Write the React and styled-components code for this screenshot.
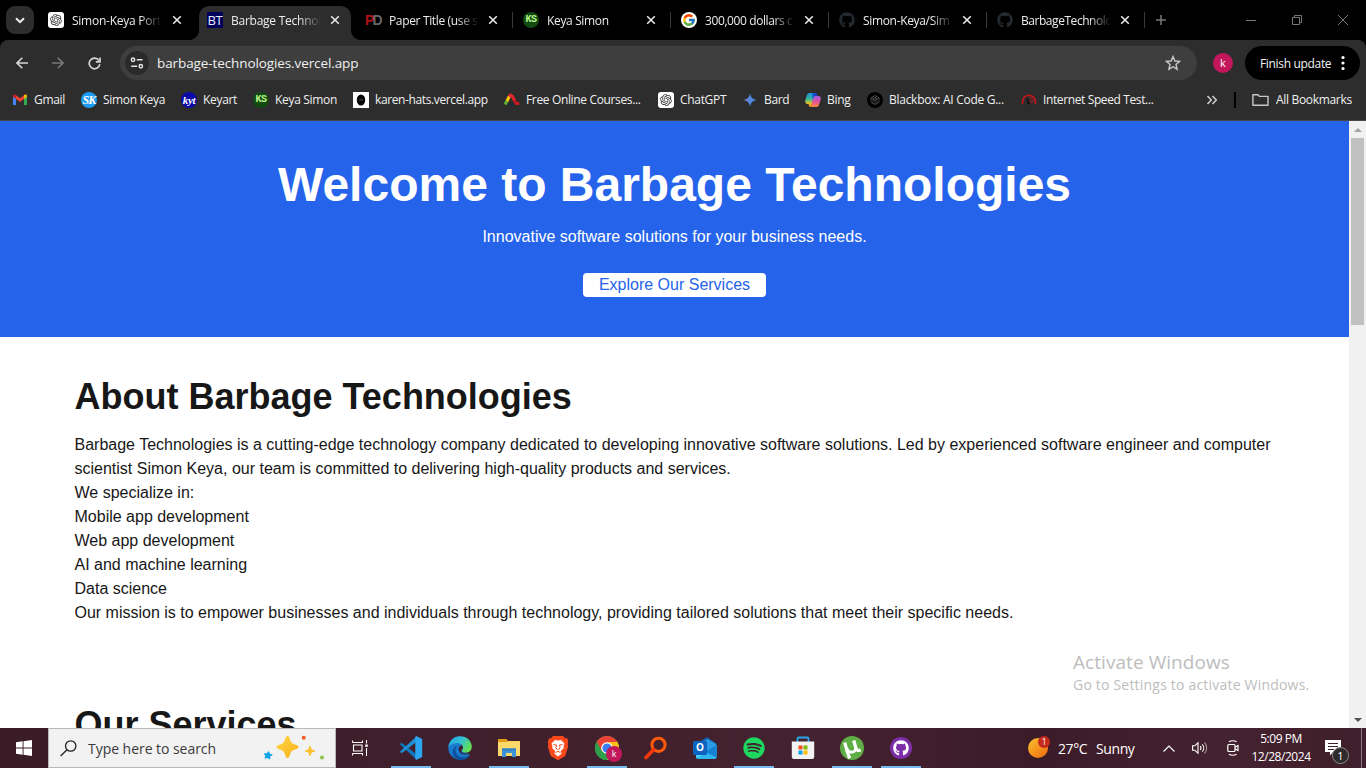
import React from "react";
import styled, { createGlobalStyle } from "styled-components";
import { RiOpenaiFill } from "react-icons/ri";
import { FcGoogle } from "react-icons/fc";
import { FaGithub, FaSpotify } from "react-icons/fa";

const Global = createGlobalStyle`
  * { box-sizing: border-box; }
  html, body { margin: 0; padding: 0; overflow: hidden; background: #fff; }
  svg { display: block; flex: none; }
  h1, h2, p, ul { margin: 0; padding: 0; }
`;

const ui = `"Open Sans", "Noto Sans", sans-serif`;

const Screen = styled.div`
  position: relative;
  width: 1366px;
  height: 768px;
  display: flex;
  flex-direction: column;
  overflow: hidden;
  font-family: ${ui};
`;

/* ---------- tab strip ---------- */
const TabStrip = styled.div`
  height: 40px;
  flex: none;
  background: #000;
  display: flex;
  align-items: flex-start;
  padding-left: 6px;
`;
const TabSearch = styled.div`
  width: 28px;
  height: 28px;
  margin-top: 6px;
  margin-right: 7px;
  border-radius: 9px;
  background: #2d2d2d;
  display: flex;
  align-items: center;
  justify-content: center;
`;
const Tab = styled.div`
  position: relative;
  width: 158px;
  height: 34px;
  margin-top: 6px;
  display: flex;
  align-items: center;
  padding: 0 0 6px 7px;
  color: #ececec;
`;
const ActiveTab = styled(Tab)`
  z-index: 1;
  width: 152px;
  margin-right: 7px;
  padding-left: 8px;
  background: #2d2d2d;
  border-radius: 10px 10px 0 0;
  &::before, &::after {
    content: "";
    position: absolute;
    bottom: 0;
    width: 10px;
    height: 10px;
  }
  &::before { left: -10px; background: radial-gradient(circle at 0 0, #000 9.5px, #2d2d2d 10.5px); }
  &::after { right: -10px; background: radial-gradient(circle at 100% 0, #000 9.5px, #2d2d2d 10.5px); }
`;
const TabTitle = styled.span`
  width: 90px;
  margin-left: 8px;
  padding-top: 1px;
  overflow: hidden;
  white-space: nowrap;
  font-size: 12px;
  line-height: 18px;
  letter-spacing: ${(p) => p.$ls ?? -0.25}px;
  -webkit-mask-image: linear-gradient(to right, #000 68px, transparent 90px);
  mask-image: linear-gradient(to right, #000 68px, transparent 90px);
`;
const TabClose = styled.span`
  margin-left: ${(p) => (p.$first ? 10 : 9)}px;
  width: 10px;
  height: 10px;
`;
const Divider = styled.i`
  width: 1px;
  height: 16px;
  margin-left: auto;
  margin-right: 3px;
  background: #3a3a3a;
`;
const WindowButtons = styled.div`
  margin-left: auto;
  display: flex;
  height: 40px;
  color: #777;
`;
const WinBtn = styled.div`
  width: 46px;
  height: 40px;
  display: flex;
  align-items: center;
  justify-content: center;
`;
const NewTab = styled.div`
  width: 26px;
  height: 40px;
  display: flex;
  align-items: center;
  justify-content: center;
`;

/* ---------- favicons ---------- */
const Fav = styled.span`
  flex: none;
  width: 16px;
  height: 16px;
  border-radius: ${(p) => p.$r || 0};
  background: ${(p) => p.$bg || "transparent"};
  color: ${(p) => p.$c || "#fff"};
  font: ${(p) => p.$font || `12px/16px ${ui}`};
  letter-spacing: ${(p) => p.$ls || 0}px;
  display: flex;
  align-items: center;
  justify-content: center;
  white-space: nowrap;
`;
const Tint = styled.span`color: ${(p) => p.$c};`;

/* ---------- toolbar ---------- */
const Chrome = styled.div`
  flex: none;
  height: 81px;
  background: #2d2d2d;
  border-radius: 8px 8px 0 0;
  border-bottom: 1px solid #474747;
`;
const ChromeBack = styled.div`
  flex: none;
  background: #000;
`;
const Toolbar = styled.div`
  height: 46px;
  display: flex;
  align-items: center;
  padding: 0 6px 0 4px;
`;
const NavBtn = styled.div`
  width: 36px;
  display: flex;
  justify-content: center;
  color: ${(p) => (p.$dim ? "#777" : "#d6d6d6")};
`;
const Omnibox = styled.div`
  width: 1077px;
  height: 34px;
  margin-left: 8px;
  border-radius: 17px;
  background: #3e3e3e;
  display: flex;
  align-items: center;
  padding: 0 16px 0 5px;
  color: #f0f0f0;
`;
const SiteInfo = styled.div`
  width: 24px;
  height: 24px;
  border-radius: 50%;
  background: #2a2a2a;
  display: flex;
  align-items: center;
  justify-content: center;
`;
const Url = styled.span`
  margin-left: 8px;
  margin-right: auto;
  font-size: 13.5px;
  letter-spacing: -0.1px;
`;
const Avatar = styled.div`
  width: 20px;
  height: 20px;
  margin-left: 16px;
  border-radius: 50%;
  background: #c2185b;
  color: #fff;
  font-size: 11px;
  line-height: 19px;
  text-align: center;
`;
const Update = styled.div`
  margin-left: 12px;
  width: 115px;
  height: 34px;
  border-radius: 17px;
  background: #000;
  color: #f2f2f2;
  font-size: 12px;
  letter-spacing: -0.33px;
  display: flex;
  align-items: center;
  padding: 0 0 0 15px;
  white-space: nowrap;
`;
const UpdateLabel = styled.span`width: 80px;`;

/* ---------- bookmarks ---------- */
const Bookmarks = styled.div`
  height: 28px;
  display: flex;
  align-items: center;
  padding-left: 12px;
  color: #f0f0f0;
`;
const Mark = styled.div`
  width: ${(p) => p.$w}px;
  flex: none;
  display: flex;
  align-items: center;
  gap: 6px;
  font-size: 12px;
  line-height: 16px;
  white-space: nowrap;
  letter-spacing: ${(p) => p.$ls ?? -0.32}px;
`;
const MarkText = styled.span`padding-bottom: 1px;`;
const BarDivider = styled.i`
  width: 2px;
  height: 16px;
  background: #000;
  margin: 0 16px 0 16px;
`;

/* ---------- page ---------- */
const Viewport = styled.div`
  flex: 1;
  min-height: 0;
  display: flex;
`;
const Page = styled.main`
  flex: 1;
  overflow: hidden;
  color: #171717;
  background: #fff;
  font: 16px/24px "Liberation Sans", Arial, sans-serif;
`;
const Hero = styled.header`
  background: #2563eb;
  color: #fff;
  text-align: center;
  padding: 40px 0;
  height: 216px;
`;
const HeroTitle = styled.h1`
  font-size: 48px;
  line-height: 48px;
  margin-bottom: 16px;
`;
const HeroButton = styled.a`
  display: inline-block;
  margin-top: 24px;
  padding: 0 16px;
  border-radius: 4px;
  background: #fff;
  color: #2563eb;
`;
const Section = styled.section`
  width: 1280px;
  margin: 0 auto;
  padding: 40px;
`;
const Heading = styled.h2`
  font-size: 36px;
  line-height: 40px;
  margin-bottom: 16px;
`;
const List = styled.ul`list-style: none;`;

const Scrollbar = styled.div`
  width: 17px;
  background: #f1f1f1;
  display: flex;
  flex-direction: column;
  align-items: center;
`;
const Arrow = styled.div`
  width: 17px;
  height: 17px;
  display: flex;
  align-items: center;
  justify-content: center;
`;
const Thumb = styled.div`
  width: 13px;
  height: 187px;
  background: #c1c1c1;
  margin-bottom: auto;
`;

const Watermark = styled.div`
  position: absolute;
  left: 1073px;
  top: 649px;
  color: #bdbdbd;
  white-space: nowrap;
`;
const WmTitle = styled.div`
  font-size: 19px;
  line-height: 26px;
  letter-spacing: 0.06px;
`;
const WmText = styled.div`
  font-size: 14px;
  line-height: 20px;
  letter-spacing: 0.2px;
`;

/* ---------- taskbar ---------- */
const Taskbar = styled.footer`
  height: 40px;
  flex: none;
  display: flex;
  background: linear-gradient(90deg, #3a1c27, #44222f 60%, #3c1b28 76%, #44222f 90%, #3f1f2b);
  color: #fff;
`;
const Cell = styled.div`
  position: relative;
  width: ${(p) => p.$w || 49}px;
  height: 40px;
  flex: none;
  display: flex;
  align-items: center;
  justify-content: center;
  padding-right: ${(p) => p.$pr || 0}px;
  padding-bottom: ${(p) => p.$pb || 0}px;
`;
const AppCell = styled(Cell)`
  padding-right: 1px;
  &::after {
    content: "";
    display: ${(p) => (p.$open ? "block" : "none")};
    position: absolute;
    left: 4px;
    right: 5px;
    bottom: 0;
    height: 2px;
    background: #76b9ed;
  }
`;
const Search = styled.div`
  width: 288px;
  height: 40px;
  background: #f2f2f2;
  border: 1px solid #b9b9b9;
  display: flex;
  align-items: center;
  padding: 0 8px 0 11px;
  color: #3a3a3a;
  font-size: 14px;
`;
const SearchText = styled.span`
  margin-left: 11px;
  margin-right: auto;
  white-space: nowrap;
  letter-spacing: -0.04px;
`;
const Tray = styled.div`
  margin-left: auto;
  width: 338px;
  display: flex;
`;
const Weather = styled.div`
  width: 128px;
  display: flex;
  align-items: center;
  white-space: nowrap;
  font-size: 14px;
  letter-spacing: -0.4px;
`;
const Temp = styled.span`
  width: 38px;
  margin-left: 7px;
`;
const Clock = styled.div`
  width: 68px;
  padding-top: 2px;
  text-align: center;
  font-size: 12px;
  line-height: 18px;
  letter-spacing: -0.45px;
  white-space: nowrap;
`;
const ShowDesktop = styled.div`
  width: 5px;
  margin-left: auto;
  border-left: 1px solid #8b7780;
`;

const TabX = ({ first }) => (
  <TabClose $first={first}>
    <svg width="10" height="10" viewBox="0 0 10 10" stroke="#e6e6e6" strokeWidth="1.6">
      <path d="M1.2 1.2 8.8 8.8M8.8 1.2 1.2 8.8" />
    </svg>
  </TabClose>
);
const OpenAi = () => (
  <Fav $bg="#fff" $r="3px"><RiOpenaiFill size={14} color="#333" /></Fav>
);
const KS = () => (
  <Fav $bg="#124a12" $r="50%" $c="#b9f58a" $ls={-0.4} $font={`bold 10px/16px "Liberation Mono", monospace`}>KS</Fav>
);

const Brave = () => (
  <svg width="22" height="26" viewBox="0 0 22 26">
    <path d="M6 1h10l2.3 2.4 2-.3L21.300 7l-.6 2 .5 2.500-3 9.500L11 25.200 3.800 21 .8 11.500 1.300 9 .7 7l1.500-3.900 1.700.3z" fill="#f9481c" />
    <path d="M11 5.500 14 5l3.500 3.600-1 2.600.4 1.800-3.300 3.200 1.200 2.200L11 21.500l-3.800-3.100 1.200-2.200L5.100 13l.4-1.800-1-2.600L8 5z" fill="#fff" />
    <path d="M6.500 9.500 9.500 10l-.6 2.600 1.500 2.200M15.500 9.500 12.500 10l.6 2.600-1.500 2.200M8.500 17.700 11 16.300l2.500 1.400" stroke="#f9481c" strokeWidth="1" fill="none" />
  </svg>
);

const VsCode = () => (
  <svg width="24" height="24" viewBox="0 0 24 24">
    <path d="M.8 8.300 2.600 6.700 18 18.600V23.600L16.800 23.100z" fill="#0f75bd" />
    <path d="M.8 15.700 2.600 17.300 18 5.400V.4L16.800.9z" fill="#1e8fd5" />
    <path d="M17.600.3 23.200 3v18l-5.600 2.700c-.7.2-1.300-.2-1.300-.8V1.100c0-.6.6-1 1.300-.8z" fill="#2aa7f0" />
  </svg>
);

const Edge = () => (
  <svg width="24" height="24" viewBox="0 0 24 24">
    <defs>
      <linearGradient id="eg1" x1="0" y1="0" x2="1" y2=".5"><stop stopColor="#1f9fe0" /><stop offset=".55" stopColor="#35c1d4" /><stop offset="1" stopColor="#62dd55" /></linearGradient>
      <linearGradient id="eg2" x1="0" y1="0" x2="0" y2="1"><stop stopColor="#1b84d8" /><stop offset="1" stopColor="#1672c4" /></linearGradient>
    </defs>
    <path d="M12 .3C5.500.3.3 5.500.3 12S5.500 23.700 12 23.700c4 0 7.600-2 9.700-5.100L14 14z" fill="url(#eg2)" />
    <path d="M.5 11C1 4.800 6 .3 12 .3c7 0 11.800 4.800 11.800 10.400 0 3.600-2.600 5.800-5.900 5.800-2.700 0-4.100-.9-4.100-1.700 0-.7 1.100-1.200 1.100-3.200C14.900 8.900 12.300 7 9 7 5 7 1.800 8.800.5 11z" fill="url(#eg1)" />
    <path d="M9.700 9.800c-2.600 1.600-3 5.200-1.100 8.200 2.800 4.300 8.500 4.600 13.200 1.200l-.2.700c-2.800 3.600-7.500 4.800-11.600 3.500C5 21.800 4.300 16.200 5.300 13.300c.8-2.200 2.600-3.300 4.400-3.500z" fill="#0d4f9c" />
    <path d="M13.500 9.600c-2.500.2-3.700 3.300-2.200 5.800 1.800 3 5.700 3.900 10.700 2.100-1.300.2-2.800.1-4.200 0-3.200-.2-4.800-1.300-4.500-2.800.2-.8 1.300-1.400 1.300-3.100 0-.8-.3-1.500-1.100-2z" fill="#3f1f2b" />
  </svg>
);

const Explorer = () => (
  <svg width="22" height="20" viewBox="0 0 22 20">
    <path d="M0 1h8l1.500 2H22v15H0z" fill="#f9d15c" />
    <path d="M0 1h8.300L10 3 8.700 4H0z" fill="#e09f16" />
    <path d="M0 4.500h22V18H0z" fill="#fbd96d" />
    <path d="M4 19v-8.500h14V19h-4v-4H8v4z" fill="#3d94d9" />
    <path d="M4 10.500h14v2H4z" fill="#2f7fc4" />
  </svg>
);

const KBadge = styled.span`
  position: absolute;
  left: 23px;
  top: 18px;
  width: 16px;
  height: 16px;
  border-radius: 50%;
  background: #c2185b;
  font-size: 9px;
  line-height: 15px;
  text-align: center;
`;
const ChromeLogo = () => (
  <svg width="24" height="24" viewBox="0 0 24 24">
    <circle cx="12" cy="12" r="12" fill="#34a853" />
    <path d="M12 12 1.600 6A12 12 0 0 1 22.400 6z" fill="#ea4335" />
    <path d="M12 6H22.400A12 12 0 0 1 12 24l5.200-9z" fill="#fbc116" />
    <path d="M1.600 6 6.800 15 12 12V6z" fill="#ea4335" />
    <path d="M1.600 6A12 12 0 0 0 12 24l5.200-9L12 17.500 6.800 15z" fill="#2f9e4b" />
    <circle cx="12" cy="12" r="5.800" fill="#fff" />
    <circle cx="12" cy="12" r="4.600" fill="#3b7ded" />
  </svg>
);

const Everything = () => (
  <svg width="24" height="24" viewBox="0 0 24 24" fill="none" stroke="#ff5a0a">
    <circle cx="14.500" cy="8.800" r="6.600" strokeWidth="3" />
    <path d="M9.800 13.500 2 21.500" strokeWidth="3.600" stroke="#f4380c" strokeLinecap="round" />
  </svg>
);

const OutlookO = styled.span`
  position: absolute;
  left: 12px;
  top: 13px;
  width: 14px;
  height: 14px;
  border-radius: 1px;
  background: #0c64c0;
  color: #fff;
  font-weight: 700;
  font-size: 10px;
  line-height: 13px;
  text-align: center;
`;
const Outlook = () => (
  <svg width="24" height="24" viewBox="0 0 24 24">
    <path d="M3 8 14 1l9.500 6.500V21H3z" fill="#0f5cab" />
    <path d="M6 8 14.500 3 23 8v6H6z" fill="#2b9be6" />
    <path d="M3 11 14 17 23.700 9v12a2 2 0 0 1-2 2H5a2 2 0 0 1-2-2z" fill="#2fb6f0" />
    <path d="M23.700 9v12.500L12 16z" fill="#1681d2" />
    <path d="M3 12v10l12-5z" fill="#49cdf7" />
  </svg>
);

const Store = () => (
  <svg width="24" height="24" viewBox="0 0 24 24">
    <path d="M6.500 6V2.500a1 1 0 0 1 1-1h9a1 1 0 0 1 1 1V6" fill="none" stroke="#28a8ea" strokeWidth="1.800" />
    <path d="M.8 5.500h22.400V21a2 2 0 0 1-2 2H2.800a2 2 0 0 1-2-2z" fill="#f3f3f3" />
    <path d="M7.500 9.500h4v4h-4z" fill="#f25022" />
    <path d="M12.500 9.500h4v4h-4z" fill="#7fba00" />
    <path d="M7.500 14.500h4v4h-4z" fill="#00a4ef" />
    <path d="M12.500 14.500h4v4h-4z" fill="#ffb900" />
  </svg>
);

const UTorrent = () => (
  <svg width="24" height="24" viewBox="0 0 24 24" fill="none" stroke="#fff" strokeWidth="3.300">
    <circle cx="12" cy="12" r="12" fill="#5fae45" stroke="none" />
    <path d="M4.800 6.500C6 12 7.500 17 9.600 22.300" />
    <path d="M7 12.500c1.300 5.300 9.200 4.600 8.700-.9" strokeWidth="2.800" />
    <path d="M13.700 4.500 15.900 12c.7 2.400 2.400 2.800 4.800 2" />
  </svg>
);

const GitHubDesktop = styled.span`
  width: 22px;
  height: 22px;
  border-radius: 50%;
  background: #7c2fa8;
  display: flex;
  align-items: center;
  justify-content: center;
`;

const Sparkles = () => (
  <svg width="64" height="28" viewBox="0 0 64 28">
    <defs><linearGradient id="sp" x1="0" y1="0" x2="1" y2="1"><stop stopColor="#ffd84a" /><stop offset="1" stopColor="#f8b017" /></linearGradient></defs>
    <path d="M24.500 2c1.200 0 1.800 1 2.300 2.700.9 3.600 2.300 5 5.900 6 1.800.5 2.800 1.200 2.800 2.300s-1 1.800-2.800 2.300c-3.600 1-5 2.400-5.900 6-.5 1.700-1.100 2.700-2.300 2.700s-1.800-1-2.300-2.700c-.9-3.600-2.300-5-5.900-6-1.800-.5-2.800-1.200-2.800-2.300s1-1.800 2.800-2.300c3.600-1 5-2.400 5.900-6C22.700 3 23.300 2 24.500 2z" fill="url(#sp)" />
    <path d="M47 12.200c.8 3.200 1.800 4.100 4.900 4.800-3.100.7-4.100 1.600-4.900 4.800-.8-3.200-1.800-4.100-4.900-4.800 3.100-.7 4.100-1.600 4.900-4.800z" fill="#fbc02d" stroke="#fbc02d" strokeLinejoin="round" />
    <path d="M5.600 18 6.500 20.300l2.300.4-2.100 1.500-.2 2.600-2-1.600-2.300.8.900-2.500-1.500-1.600 2.500.1z" fill="#0ea5e9" stroke="#0ea5e9" strokeWidth="1.300" strokeLinejoin="round" />
    <circle cx="40.700" cy="3.800" r="2" fill="#f25c22" />
    <circle cx="59" cy="23.500" r="2" fill="#8bc34a" />
  </svg>
);

const SunWrap = styled.span`
  position: relative;
  width: 23px;
  height: 24px;
`;
const Sun = styled.span`
  position: absolute;
  left: 0;
  top: 2px;
  width: 20px;
  height: 20px;
  border-radius: 50%;
  background: linear-gradient(135deg, #f9b32b 15%, #f07a14 80%);
`;
const SunBadge = styled.span`
  position: absolute;
  left: 10px;
  top: 0;
  width: 12px;
  height: 12px;
  border-radius: 50%;
  background: #c42b1c;
  font-size: 8.5px;
  line-height: 12px;
  text-align: center;
`;
const NoteBadge = styled.span`
  position: absolute;
  left: 17px;
  top: 19px;
  width: 17px;
  height: 17px;
  border-radius: 50%;
  border: 1px solid #8d8d8d;
  background: #2d2b2c;
  font-size: 11px;
  line-height: 15px;
  text-align: center;
`;

export default function App() {
  return (
    <Screen>
      <Global />
      <TabStrip>
        <TabSearch>
          <svg width="10" height="7" viewBox="0 0 10 7" fill="none" stroke="#eee" strokeWidth="2"><path d="M1 1.200 5 5.200 9 1.200" /></svg>
        </TabSearch>
        <Tab><OpenAi /><TabTitle>Simon-Keya Port</TabTitle><TabX first /></Tab>
        <ActiveTab>
          <Fav $bg="#00005c" $c="#e8e8ff" $font={`13px/15px ${ui}`} $ls={-0.4}>BT</Fav>
          <TabTitle>Barbage Technol</TabTitle><TabX />
        </ActiveTab>
        <Tab>
          <Fav $font={`bold 14px/16px "Liberation Sans", sans-serif`} $ls={-1.8}>
            <Tint $c="#b01116">P</Tint><Tint $c="#666">D</Tint>
          </Fav>
          <TabTitle $ls={-0.35}>Paper Title (use s</TabTitle><TabX /><Divider />
        </Tab>
        <Tab><KS /><TabTitle $ls={-0.35}>Keya Simon</TabTitle><TabX /><Divider /></Tab>
        <Tab><Fav $bg="#fff" $r="50%"><FcGoogle size={14} /></Fav><TabTitle $ls={-0.4}>300,000 dollars c</TabTitle><TabX /><Divider /></Tab>
        <Tab><Fav><FaGithub size={16} color="#24292f" /></Fav><TabTitle $ls={-0.33}>Simon-Keya/Sim</TabTitle><TabX /><Divider /></Tab>
        <Tab><Fav><FaGithub size={16} color="#24292f" /></Fav><TabTitle $ls={-0.45}>BarbageTechnolo</TabTitle><TabX /><Divider /></Tab>
        <NewTab>
          <svg width="10" height="10" viewBox="0 0 10 10" stroke="#777" strokeWidth="1.500"><path d="M5 0v10M0 5h10" /></svg>
        </NewTab>
        <WindowButtons>
          <WinBtn><svg width="10" height="10" viewBox="0 0 10 10" stroke="currentColor"><path d="M0 5.500h10" /></svg></WinBtn>
          <WinBtn><svg width="10" height="10" viewBox="0 0 10 10" stroke="currentColor" fill="none"><path d="M.5 2.500h7v7h-7zM2.500 2.500v-2h7v7h-2" /></svg></WinBtn>
          <WinBtn><svg width="10" height="10" viewBox="0 0 10 10" stroke="currentColor"><path d="M0 0l10 10M10 0 0 10" /></svg></WinBtn>
        </WindowButtons>
      </TabStrip>

      <ChromeBack>
        <Chrome>
          <Toolbar>
            <NavBtn><svg width="12" height="12" viewBox="0 0 12 12" fill="none" stroke="currentColor" strokeWidth="1.600"><path d="M12 6H1.200M6.300.7 1 6l5.300 5.300" /></svg></NavBtn>
            <NavBtn $dim><svg width="12" height="12" viewBox="0 0 12 12" fill="none" stroke="currentColor" strokeWidth="1.600"><path d="M0 6h10.800M5.700.7 11 6l-5.300 5.300" /></svg></NavBtn>
            <NavBtn><svg width="13" height="13" viewBox="0 0 13 13" fill="none" stroke="currentColor" strokeWidth="1.700"><path d="M11 3.600A5.300 5.300 0 1 0 11.800 7.200" /><path d="M12 .5v4.300H7.800" /></svg></NavBtn>
            <Omnibox>
              <SiteInfo>
                <svg width="14" height="12" viewBox="0 0 14 12" fill="none" stroke="#e3e3e3" strokeWidth="1.500"><circle cx="3" cy="2.800" r="1.700" /><path d="M6.800 2.800H12.500M1.200 9.200H7" /><circle cx="10.800" cy="9.200" r="1.700" /></svg>
              </SiteInfo>
              <Url>barbage-technologies.vercel.app</Url>
              <svg width="16" height="16" viewBox="0 0 16 16" fill="none" stroke="#c9c9c9" strokeWidth="1.400"><path d="M8 1.600 9.900 6l4.700.4-3.600 3.100 1.100 4.700L8 11.700l-4.100 2.500L5 9.500 1.400 6.400 6.100 6z" /></svg>
            </Omnibox>
            <Avatar>k</Avatar>
            <Update>
              <UpdateLabel>Finish update</UpdateLabel>
              <svg width="6" height="16" viewBox="0 0 6 16" fill="#fff"><circle cx="3" cy="2.500" r="1.600" /><circle cx="3" cy="8" r="1.600" /><circle cx="3" cy="13.500" r="1.600" /></svg>
            </Update>
          </Toolbar>
          <Bookmarks>
            <Mark $w={69} $ls={-0.3}>
              <svg width="16" height="16" viewBox="0 0 16 16"><path d="M1 4v9h3V6.500z" fill="#4285f4" /><path d="M15 4v9h-3V6.500z" fill="#34a853" /><path d="M1 4.500V4c0-1.500 1.600-2 2.700-1.100L4 3.100v3.900L1 5z" fill="#c5221f" /><path d="M15 4.500V4c0-1.500-1.600-2-2.700-1.100L12 3.100v3.900L15 5z" fill="#fbbc04" /><path d="M4 3.200 8 6.200l4-3V7L8 10 4 7z" fill="#ea4335" /></svg>
              <MarkText>Gmail</MarkText>
            </Mark>
            <Mark $w={100}><Fav $bg="#1d9bf0" $r="50%" $ls={-0.8} $font={`italic bold 12px/16px "Liberation Serif", serif`}>SK</Fav><MarkText>Simon Keya</MarkText></Mark>
            <Mark $w={72}><Fav $bg="#0a0aa8" $r="50%" $ls={-0.3} $font={`italic bold 11px/13px "Liberation Serif", serif`}>kyt</Fav><MarkText>Keyart</MarkText></Mark>
            <Mark $w={100}><KS /><MarkText>Keya Simon</MarkText></Mark>
            <Mark $w={151} $ls={-0.38}>
              <Fav $bg="#fff"><svg width="10" height="12" viewBox="0 0 10 12"><ellipse cx="5" cy="6" rx="4.200" ry="5.500" fill="#050505" /><path d="M3 6.300 4.500 5.700l1 .4L7 5.700" stroke="#777" fill="none" strokeWidth=".7" /></svg></Fav>
              <MarkText>karen-hats.vercel.app</MarkText>
            </Mark>
            <Mark $w={154} $ls={-0.35}>
              <svg width="16" height="16" viewBox="0 0 16 16" fill="none" strokeWidth="3"><path d="M1 12.500 3.500 8" stroke="#5cb531" /><path d="M3 9 5.500 4" stroke="#fdc500" /><path d="M5 4.500 6.500 3 8.500 4.500l2 4" stroke="#e4262c" /><path d="M10 8l2.300 3.500h3" stroke="#c91820" /><path d="M6 12.500h4" stroke="#1d2b50" strokeWidth="1.500" /></svg>
              <MarkText>Free Online Courses...</MarkText>
            </Mark>
            <Mark $w={84}><OpenAi /><MarkText>ChatGPT</MarkText></Mark>
            <Mark $w={63}>
              <svg width="16" height="16" viewBox="0 0 16 16"><defs><linearGradient id="bd"><stop stopColor="#8a7fd0" /><stop offset=".4" stopColor="#5a86dd" /><stop offset="1" stopColor="#3f8ce8" /></linearGradient></defs><path d="M8 1.500C8.600 5.300 10.700 7.400 14.500 8 10.700 8.600 8.600 10.700 8 14.500 7.400 10.700 5.300 8.600 1.500 8 5.300 7.400 7.400 5.300 8 1.500z" fill="url(#bd)" /></svg>
              <MarkText>Bard</MarkText>
            </Mark>
            <Mark $w={62}>
              <svg width="16" height="16" viewBox="0 0 16 16"><defs><linearGradient id="b1" x1="0" y1="0" x2="0" y2="1"><stop stopColor="#1e8fe0" /><stop offset=".5" stopColor="#2fb5a0" /><stop offset="1" stopColor="#f0c419" /></linearGradient><linearGradient id="b2" x1="0" y1="0" x2="0" y2="1"><stop stopColor="#9b5de5" /><stop offset=".5" stopColor="#e0509f" /><stop offset="1" stopColor="#fb8b3c" /></linearGradient></defs><path d="M4.500 1H11L8 10.500c-.3 1-1 1.500-2 1.500H2.500C.4 12-.2 10 .4 8L2 3c.4-1.300 1.200-2 2.500-2z" fill="url(#b1)" /><path d="M11.500 15H5.500L8.500 5.500c.3-1 1-1.500 2-1.500h3c2.100 0 2.700 2 2.100 4L14 13c-.4 1.300-1.200 2-2.500 2z" fill="url(#b2)" /><path d="M7.500 1H10c1.500 0 2 1 2.500 3h-2c-1 0-1.700.5-2 1.500L7.600 8z" fill="#1748c9" /><path d="M5 12h1.500L5.500 15c-1 0-1.600-1-2-3z" fill="#f5a623" /></svg>
              <MarkText>Bing</MarkText>
            </Mark>
            <Mark $w={154} $ls={-0.27}>
              <Fav $bg="#000" $r="50%"><svg width="12" height="12" viewBox="0 0 12 12" fill="none" stroke="#8a8a8a" strokeWidth=".7"><path d="M6 1.500 10 3.800v4.500L6 10.600 2 8.300V3.800zM2 3.800l4 2.300 4-2.300M6 6v4.600M4 2.600l4 2.400v4.500M8 2.600 4 5v4.500" strokeDasharray="1 .6" /></svg></Fav>
              <MarkText>Blackbox: AI Code G...</MarkText>
            </Mark>
            <Mark $w={185} $ls={-0.38}>
              <svg width="16" height="16" viewBox="0 0 16 16" fill="none" stroke="#c4161c" strokeWidth="1.600"><path d="M1.600 12V9.500A6.400 6.200 0 0 1 14.400 9.500V12" /><path d="M8.500 5.500a4 4 0 0 1 3.500 5M8.500 7.800A3 3 0 0 1 10 11" strokeWidth="1" /><path d="M6 6l3 6H7z" fill="#111" stroke="#111" strokeWidth=".8" /></svg>
              <MarkText>Internet Speed Test...</MarkText>
            </Mark>
            <svg width="12" height="10" viewBox="0 0 12 10" fill="none" stroke="#d0d0d0" strokeWidth="1.500"><path d="M1.500 1 5.300 5 1.500 9M6.500 1l3.800 4-3.800 4" /></svg>
            <BarDivider />
            <Mark $w={100}>
              <svg width="18" height="16" viewBox="0 0 18 16" fill="none" stroke="#c7c7c7" strokeWidth="1.400"><path d="M.9 2.700h5l1.600 1.700h8.500v8.900H.9z" strokeLinejoin="round" /></svg>
              <MarkText>All Bookmarks</MarkText>
            </Mark>
          </Bookmarks>
        </Chrome>
      </ChromeBack>

      <Viewport>
        <Page>
          <Hero>
            <HeroTitle>Welcome to Barbage Technologies</HeroTitle>
            <p>Innovative software solutions for your business needs.</p>
            <HeroButton>Explore Our Services</HeroButton>
          </Hero>
          <Section>
            <Heading>About Barbage Technologies</Heading>
            <p>Barbage Technologies is a cutting-edge technology company dedicated to developing innovative software solutions. Led by experienced software engineer and computer scientist Simon Keya, our team is committed to delivering high-quality products and services.</p>
            <p>We specialize in:</p>
            <List>
              <li>Mobile app development</li>
              <li>Web app development</li>
              <li>AI and machine learning</li>
              <li>Data science</li>
            </List>
            <p>Our mission is to empower businesses and individuals through technology, providing tailored solutions that meet their specific needs.</p>
          </Section>
          <Section>
            <Heading>Our Services</Heading>
          </Section>
        </Page>
        <Scrollbar>
          <Arrow><svg width="8" height="4" viewBox="0 0 8 4"><path d="M0 4 4 0l4 4z" fill="#a3a3a3" /></svg></Arrow>
          <Thumb />
          <Arrow><svg width="8" height="4" viewBox="0 0 8 4"><path d="M0 0h8L4 4z" fill="#505050" /></svg></Arrow>
        </Scrollbar>
      </Viewport>

      <Watermark>
        <WmTitle>Activate Windows</WmTitle>
        <WmText>Go to Settings to activate Windows.</WmText>
      </Watermark>

      <Taskbar>
        <Cell $w={48}>
          <svg width="16" height="16" viewBox="0 0 16 16" fill="#fff"><path d="M0 2.200 6.600 1.300v6.200H0zM7.500 1.200 16 0v7.500H7.500zM0 8.500h6.600v6.200L0 13.800zM7.500 8.500H16V16l-8.500-1.200z" /></svg>
        </Cell>
        <Search>
          <svg width="17" height="17" viewBox="0 0 17 17" fill="none" stroke="#222" strokeWidth="1.300"><circle cx="10.700" cy="6" r="5.200" /><path d="M7 9.700.6 16" /></svg>
          <SearchText>Type here to search</SearchText>
          <Sparkles />
        </Search>
        <Cell $w={51} $pr={3}>
          <svg width="16" height="16" viewBox="0 0 16 16" fill="none" stroke="#fff" strokeWidth="1.100"><path d="M.5 2.500V.6M.5 2.500h10V.6M.5 13.500v1.900M.5 13.500h10v1.900M1.500 5h8.500v6H1.500zM14.500 0v3.500M14.500 8v8" /><path d="M13.200 4.500h2.600v2.300h-2.600z" fill="#fff" stroke="none" /></svg>
        </Cell>
        <AppCell $open><VsCode /></AppCell>
        <AppCell><Edge /></AppCell>
        <AppCell $open><Explorer /></AppCell>
        <AppCell><Brave /></AppCell>
        <AppCell $open><ChromeLogo /><KBadge>k</KBadge></AppCell>
        <AppCell><Everything /></AppCell>
        <AppCell><Outlook /><OutlookO>O</OutlookO></AppCell>
        <AppCell $open><FaSpotify size={22} color="#1ed760" /></AppCell>
        <AppCell><Store /></AppCell>
        <AppCell $open><UTorrent /></AppCell>
        <AppCell $open><GitHubDesktop><FaGithub size={16} color="#fff" /></GitHubDesktop></AppCell>
        <Tray>
          <Weather>
            <SunWrap><Sun /><SunBadge>1</SunBadge></SunWrap>
            <Temp>27°C</Temp>Sunny
          </Weather>
          <Cell $w={26}><svg width="12" height="7" viewBox="0 0 12 7" fill="none" stroke="#fff" strokeWidth="1.200"><path d="M.5 6.500 6 1l5.500 5.500" /></svg></Cell>
          <Cell $w={37}>
            <svg width="17" height="14" viewBox="0 0 17 14" fill="none" stroke="#fff" strokeWidth="1.100"><path d="M.6 4.800h2.200L6 1.800v10.400l-3.200-3H.6z" /><path d="M8.200 5a3 3 0 0 1 0 4M10.300 3.300a5.500 5.500 0 0 1 0 7.400" /><path d="M12.500 1.500a8 8 0 0 1 0 11" opacity=".5" /></svg>
          </Cell>
          <Cell $w={28}>
            <svg width="12" height="16" viewBox="0 0 12 16" fill="none" stroke="#fff" strokeWidth="1.200"><rect x=".8" y="4.500" width="7.200" height="7" rx="1" /><path d="M8 7.200 11 5.500v5L8 8.800M2 1.800C4 .5 7.500.5 9.500 1.800M2 14.200c2 1.300 5.500 1.300 7.500 0" /></svg>
          </Cell>
          <Clock>5:09 PM<br />12/28/2024</Clock>
          <Cell $w={36} $pb={1}>
            <svg width="16" height="16" viewBox="0 0 16 16"><path d="M0 0h16v12H8l-3 3.500V12H0z" fill="#fff" /><path d="M3 3.500h10M3 6.500h10M3 9.500h6" stroke="#3f1f2b" /></svg>
            <NoteBadge>1</NoteBadge>
          </Cell>
          <ShowDesktop />
        </Tray>
      </Taskbar>
    </Screen>
  );
}
